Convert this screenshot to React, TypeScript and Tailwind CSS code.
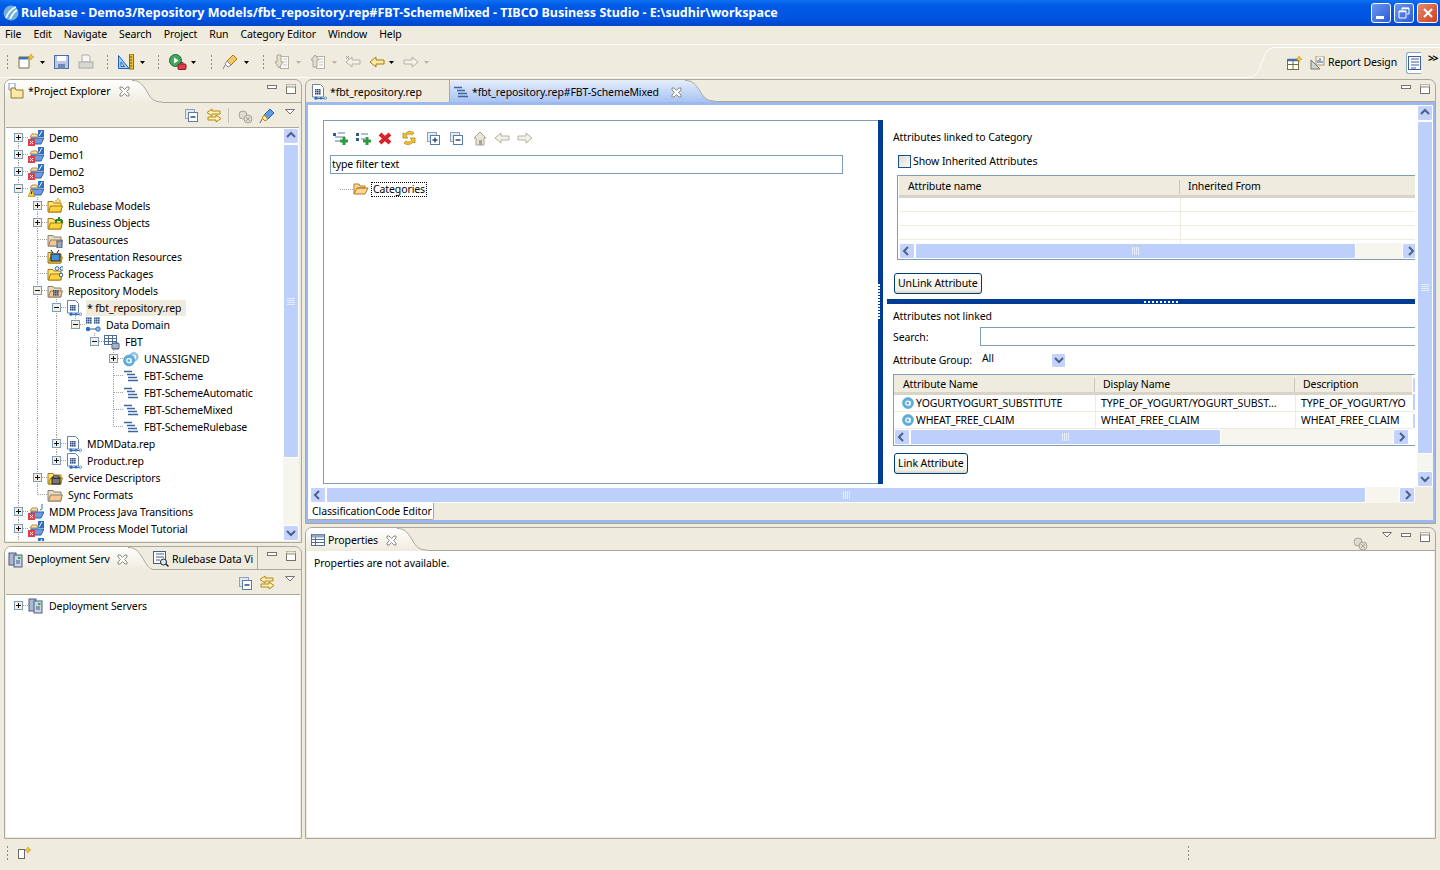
import type { ReactNode } from "react";

// --- little pixel icons, all on a 16 grid ---

function Svg({ s = 16, w, children, className = "" }: { s?: number; w?: number; children: ReactNode; className?: string }) {
  return (
    <svg width={w ?? s} height={s} viewBox={`0 0 ${w ?? s} ${s}`} className={`shrink-0 block ${className}`}>
      {children}
    </svg>
  );
}

const Logo = () => (
  <Svg>
    <circle cx="8" cy="8" r="7.5" fill="#6fb0dc" />
    <path d="M3 13C5 8 8 4 13 2M7 14c2-4 4-7 7-9" stroke="#fff" strokeWidth="1.6" fill="none" />
  </Svg>
);

const Folder = ({ dull }: { dull?: boolean }) => (
  <>
    <path d="M1 5V3.500h5L7 5h7v9H1z" fill={dull ? "#e8d9b8" : "#ffe27a"} stroke={dull ? "#8a8070" : "#a57a10"} />
    <path d="M1.500 14L3.500 8H15.500L13.500 14z" fill={dull ? "#f4c98e" : "#ffd23e"} stroke={dull ? "#8a8070" : "#a57a10"} />
  </>
);

const Grid = ({ x, y, c = "#2f4f86" }: { x: number; y: number; c?: string }) => (
  <g fill={c}>
    {[0, 2, 4].map((a) => [0, 2, 4].map((b) => <rect key={`${a}${b}`} x={x + a} y={y + b} width="1.6" height="1.6" />))}
  </g>
);

const ProjectIcon = ({ mark, pen = "wave" }: { mark: "err" | "warn"; pen?: "wave" | "j" }) => (
  <Svg>
    <rect x="10" y="0" width="6" height="7" fill={pen === "wave" ? "#2d6fc0" : "#fff"} />
    <path d={pen === "wave" ? "M11 6l3-5" : "M14 0v5l-2 1"} stroke={pen === "wave" ? "#fff" : "#2d6fc0"} fill="none" />
    <path d="M2 7l2-3h5l1 3z" fill="#f6e2b0" stroke="#b58a40" />
    <path d="M3 8h13l-3 6H3z" fill="#6f9be0" stroke="#2a5ca8" />
    {mark === "err" ? (
      <>
        <rect x="0" y="9" width="7" height="7" fill="#e0404c" />
        <path d="M2 11l3 3m0-3l-3 3" stroke="#fff" />
      </>
    ) : (
      <>
        <path d="M3.500 8L7 15.500H0z" fill="#ffc93a" stroke="#a57a10" strokeWidth=".6" />
        <path d="M3.500 10.500v2.500" stroke="#222" />
      </>
    )}
  </Svg>
);

const RepIcon = () => (
  <Svg>
    <path d="M1.500 .5h8l3 3V13h-11z" fill="#fff" stroke="#6f82a5" />
    <Grid x={4} y={5} />
    <path d="M4 14.500h11" stroke="#2a6fc4" strokeWidth="1.200" />
    <circle cx="5" cy="14.200" r="1.600" fill="#2a6fc4" />
    <circle cx="10" cy="14.200" r="1.200" fill="#2a6fc4" />
    <circle cx="14.500" cy="14.200" r="1.200" fill="#fff" stroke="#2a6fc4" strokeWidth=".7" />
  </Svg>
);

const DomainIcon = () => (
  <Svg>
    <Grid x={1} y={1} c="#345a90" />
    <Grid x={9} y={1} c="#345a90" />
    <path d="M1 0h6M9 0h6M2 12h12" stroke="#345a90" />
    <circle cx="3" cy="12" r="2.200" fill="#2a6fc4" />
    <circle cx="13" cy="12" r="2.200" fill="#8fb9ea" stroke="#2a6fc4" />
  </Svg>
);

const TableIcon = () => (
  <Svg>
    <rect x=".5" y="1.500" width="12" height="9" fill="#fff" stroke="#4f6d9c" />
    <path d="M.5 4.500h12M.5 7.500h12M4.500 1.500v9M8.500 1.500v9" stroke="#4f6d9c" />
    <rect x="8" y="9" width="7" height="6" rx="1" fill="#8fa0b8" stroke="#3c4d66" />
    <path d="M8 11h7M8 13h7" stroke="#dde" strokeWidth=".6" />
  </Svg>
);

const AttrCircle = ({ c = "#5fb0dc" }: { c?: string }) => (
  <>
    <circle cx="6" cy="6" r="5.500" fill={c} stroke="#3d8dbf" strokeWidth=".5" />
    <circle cx="5.800" cy="6.200" r="2" fill="none" stroke="#fff" strokeWidth="1.200" />
    <path d="M8 4v4.500" stroke="#fff" strokeWidth="1.100" />
  </>
);

const GroupIcon = () => (
  <Svg>
    <g transform="translate(6 1) scale(.8)">
      <AttrCircle c="#9cc8ea" />
    </g>
    <g transform="translate(0 3.500)">
      <AttrCircle />
    </g>
  </Svg>
);

const SchemeIcon = () => (
  <Svg>
    <path d="M1 3.500h8M4 6.500h8M5 9.500h9M5 12.500h10" stroke="#3d659f" strokeWidth="1.400" />
  </Svg>
);

const ServerIcon = () => (
  <Svg>
    <rect x="1" y="1" width="7" height="12" fill="#a9b9d4" stroke="#4a5d7c" />
    <rect x="6" y="3" width="8" height="12" fill="#c9d5e8" stroke="#4a5d7c" />
    <rect x="10" y="5" width="2.500" height="2" fill="#33b040" />
    <path d="M8 9h4M8 11h4" stroke="#4a5d7c" />
  </Svg>
);

const ExplorerIcon = () => (
  <Svg>
    <path d="M1 0h6v7H1z" fill="#fff" stroke="#7f93b5" />
    <path d="M3 7V5h4l1 2h7v8H3z" fill="#ffe9a6" stroke="#96752c" />
  </Svg>
);

const CloseX = () => (
  <Svg s={11}>
    <path d="M1 1h2l2.500 2.500L8 1h2v2L7.500 5.500 10 8v2H8L5.500 7.500 3 10H1V8l2.500-2.500L1 3z" fill="#fff" stroke="#8a8a80" />
  </Svg>
);

const PaneButtons = () => (
  <div className="flex items-start gap-[9px]">
    <Svg s={4} w={10} className="mt-[1px]">
      <rect x=".5" y=".5" width="9" height="3" fill="#fff" stroke="#77736a" />
    </Svg>
    <Svg s={11} w={10}>
      <rect x=".5" y=".5" width="9" height="9" fill="#fff" stroke="#77736a" />
      <rect x="0" y="0" width="10" height="3" fill="#efebde" stroke="#77736a" strokeWidth=".8" />
    </Svg>
  </div>
);

const ViewMenu = () => (
  <Svg s={6} w={10}>
    <path d="M.5.5h9L5 5z" fill="#fff" stroke="#77736a" />
  </Svg>
);

const DropArrow = ({ off }: { off?: boolean }) => (
  <Svg s={3} w={5}>
    <path d="M0 0h5L2.500 3z" fill={off ? "#b8b5a8" : "#000"} />
  </Svg>
);

const CollapseAll = () => (
  <Svg s={13} w={13}>
    <rect x=".5" y=".5" width="9" height="9" fill="#e4e8ef" stroke="#8ea2bf" />
    <rect x="3.500" y="3.500" width="9" height="9" fill="#fff" stroke="#5a7aa8" />
    <path d="M5.500 8h5" stroke="#254a80" strokeWidth="1.400" />
  </Svg>
);

const ExpandAll = () => (
  <Svg s={13} w={13}>
    <rect x=".5" y=".5" width="9" height="9" fill="#e4e8ef" stroke="#8ea2bf" />
    <rect x="3.500" y="3.500" width="9" height="9" fill="#fff" stroke="#5a7aa8" />
    <path d="M5.500 8h5M8 5.500v5" stroke="#254a80" strokeWidth="1.400" />
  </Svg>
);

const LinkArrows = () => (
  <Svg>
    <path d="M6 1L1 4.500 6 8V6h8V3H6zM10 7v2H2v3h8v2l5-3.500z" fill="#fff1b8" stroke="#b8860b" />
  </Svg>
);

const GearOff = () => (
  <Svg>
    <circle cx="6" cy="7" r="4" fill="#dedbd0" stroke="#a8a598" />
    <circle cx="11" cy="11" r="4" fill="#dedbd0" stroke="#a8a598" />
    <path d="M9 9l4 4m0-4l-4 4" stroke="#a8a598" />
  </Svg>
);

const PinBlue = () => (
  <Svg>
    <path d="M11 1l4 4-6 6-4-4z" fill="#5d9be8" stroke="#2c5fa8" />
    <path d="M5 7l4 4-3 2-3-3z" fill="#ffe9a6" stroke="#b8860b" />
    <path d="M3 11l-2 4" stroke="#666" />
  </Svg>
);

const PenYellow = () => (
  <Svg>
    <path d="M11 1l4 4-6 6-4-4z" fill="#f5c76a" stroke="#a57a10" />
    <path d="M5 7l4 4-3 2-3-3z" fill="#fff" stroke="#888" />
    <path d="M3 11l-2 4" stroke="#888" />
  </Svg>
);

const NewIcon = () => (
  <Svg>
    <path d="M1 3h10v11H1z" fill="#fff" stroke="#7a6a3a" />
    <path d="M1 3h9v2.500H1z" fill="#3f6fb5" />
    <path d="M13 0l1 2 2 1-2 1-1 2-1-2-2-1 2-1z" fill="#f5c52e" stroke="#b8860b" strokeWidth=".5" />
  </Svg>
);

const SaveIcon = () => (
  <Svg>
    <rect x=".5" y="1.500" width="14" height="13" fill="#b8c8e8" stroke="#4f6d9c" />
    <rect x="3" y="2" width="9" height="5" fill="#fff" />
    <rect x="4" y="10" width="7" height="4.500" fill="#6f8ab5" />
  </Svg>
);

const PrintIcon = () => (
  <Svg>
    <path d="M4 1h7l1 2v5H4z" fill="#f5f5f5" stroke="#b0b0a8" />
    <rect x="1" y="8" width="14" height="6" fill="#d8d8d0" stroke="#aaa" />
  </Svg>
);

const RulerIcon = () => (
  <Svg>
    <path d="M.5 1.500L11 14.500H.5z" fill="#a8d0f5" stroke="#1b5fc0" />
    <path d="M3 8l3.500 4.500H3z" fill="#fff" stroke="#1b5fc0" />
    <rect x="11.500" y="0" width="4" height="15" fill="#f0c030" stroke="#8a6a10" />
    <path d="M12 3h2M12 6h2M12 9h2M12 12h2" stroke="#553" />
  </Svg>
);

const RunIcon = () => (
  <Svg w={18}>
    <circle cx="6.500" cy="6.500" r="6" fill="#3fa85a" stroke="#1e6b35" />
    <path d="M5 3.500l4.500 3-4.500 3z" fill="#fff" />
    <rect x="9" y="10" width="8" height="5.500" rx="1" fill="#d8404c" stroke="#8a1c24" />
    <path d="M12 10V8.500h2V10" stroke="#8a1c24" fill="none" />
  </Svg>
);

const ImportOff = ({ up }: { up?: boolean }) => (
  <Svg>
    <rect x="6.500" y="2.500" width="8" height="12" fill="#fafafa" stroke="#b5b2a5" />
    <path d="M9 5h4M9 8h4M9 11h4" stroke="#c8c5b8" />
    <path d={up ? "M5 1L1 6h2v7h4V6h2z" : "M3 1h4v7h2l-4 6-4-6h2z"} fill="#e4e0d0" stroke="#a8a598" />
  </Svg>
);

const Arrow = ({ dir, on, star }: { dir: "l" | "r"; on?: boolean; star?: boolean }) => (
  <Svg s={14} w={16}>
    <path
      d={dir === "l" ? "M1 7l6-5v3h8v4H7v3z" : "M15 7L9 2v3H1v4h8v3z"}
      fill={on ? "#ffeeaa" : "#f3f1e8"}
      stroke={on ? "#a87a10" : "#b5b2a5"}
    />
    {star && <path d="M1 1l3 3m0-3L1 4" stroke="#a09d90" />}
  </Svg>
);

const Gripper = () => (
  <div className="w-[3px] h-[16px] bg-[radial-gradient(#8f8c80_1px,transparent_1px)] bg-[length:3px_4px] shrink-0" />
);

const Chev = ({ d }: { d: "u" | "d" | "l" | "r" }) => {
  const p = { u: "M3 8l4-4 4 4", d: "M3 5l4 4 4-4", l: "M8 3L4 7l4 4", r: "M6 3l4 4-4 4" }[d];
  return (
    <Svg s={14} w={14}>
      <path d={p} stroke="#4d6185" strokeWidth="2" fill="none" />
    </Svg>
  );
};

// --- scrollbars ---

function SBtn({ d, className = "" }: { d: "u" | "d" | "l" | "r"; className?: string }) {
  return (
    <div className={`w-[16px] h-[16px] shrink-0 flex items-center justify-center rounded-[2px] border border-white bg-[#c3d3fd] ${className}`}>
      <Chev d={d} />
    </div>
  );
}

function VBar({ thumb, className = "" }: { thumb: string; className?: string }) {
  return (
    <div className={`w-[16px] shrink-0 flex flex-col bg-[#f6f5ee] ${className}`}>
      <SBtn d="u" />
      <div className={`${thumb} flex items-center justify-center shrink-0 border border-white rounded-[2px] bg-[#bcd0fb]`}>
        <div className="w-[8px] h-[7px] bg-[repeating-linear-gradient(180deg,#e8eefc_0,#e8eefc_1px,transparent_1px,transparent_2px)]" />
      </div>
      <div className="flex-1" />
      <SBtn d="d" />
    </div>
  );
}

function HBar({ thumb, className = "" }: { thumb: string; className?: string }) {
  return (
    <div className={`h-[16px] shrink-0 flex bg-[#f6f5ee] ${className}`}>
      <SBtn d="l" />
      <div className={`${thumb} flex items-center justify-center shrink-0 border border-white rounded-[2px] bg-[#bcd0fb]`}>
        <div className="h-[8px] w-[7px] bg-[repeating-linear-gradient(90deg,#e8eefc_0,#e8eefc_1px,transparent_1px,transparent_2px)]" />
      </div>
      <div className="flex-1" />
      <SBtn d="r" />
    </div>
  );
}

// --- project tree ---

type Row = {
  g: string; // ancestor columns that carry a dotted line
  t?: "+" | "-";
  last?: boolean;
  first?: boolean;
  icon: ReactNode;
  label: string;
  sel?: boolean;
};

const fold = (extra?: ReactNode, dull?: boolean) => (
  <Svg>
    <Folder dull={dull} />
    {extra}
  </Svg>
);

const TREE: Row[] = [
  { g: "", t: "+", first: true, icon: <ProjectIcon mark="err" />, label: "Demo" },
  { g: "", t: "+", icon: <ProjectIcon mark="err" />, label: "Demo1" },
  { g: "", t: "+", icon: <ProjectIcon mark="err" />, label: "Demo2" },
  { g: "", t: "-", icon: <ProjectIcon mark="warn" />, label: "Demo3" },
  { g: "1", t: "+", icon: fold(<path d="M11 0l1 2 2 1-2 1-1 2-1-2-2-1 2-1z" fill="#ffe27a" stroke="#b8860b" strokeWidth=".5" />), label: "Rulebase Models" },
  { g: "1", t: "+", icon: fold(<path d="M9 5h6M12 2v3M9 5v3M15 5v3" stroke="#1c8a2c" strokeWidth="2" fill="none" />), label: "Business Objects" },
  { g: "1", icon: fold(<rect x="10" y="9" width="5" height="7" fill="#9aa8bc" stroke="#4a5d7c" />, true), label: "Datasources" },
  { g: "1", icon: fold(<><rect x="4" y="5" width="9" height="7" fill="#3f8fe0" stroke="#222" /><path d="M6 4L4 1m6 3l2-3" stroke="#222" /></>), label: "Presentation Resources" },
  { g: "1", icon: fold(<><circle cx="10" cy="2.500" r="1.800" fill="#fff" stroke="#1b5fc0" /><circle cx="15" cy="2.500" r="1.800" fill="#fff" stroke="#1b5fc0" /><circle cx="14" cy="9" r="1.800" fill="#fff" stroke="#1b5fc0" /></>), label: "Process Packages" },
  { g: "1", t: "-", icon: fold(<Grid x={6} y={7} />, true), label: "Repository Models" },
  { g: "11", t: "-", icon: <RepIcon />, label: "* fbt_repository.rep", sel: true },
  { g: "111", t: "-", last: true, icon: <DomainIcon />, label: "Data Domain" },
  { g: "1110", t: "-", last: true, icon: <TableIcon />, label: "FBT" },
  { g: "11100", t: "+", icon: <GroupIcon />, label: "UNASSIGNED" },
  { g: "11100", icon: <SchemeIcon />, label: "FBT-Scheme" },
  { g: "11100", icon: <SchemeIcon />, label: "FBT-SchemeAutomatic" },
  { g: "11100", icon: <SchemeIcon />, label: "FBT-SchemeMixed" },
  { g: "11100", last: true, icon: <SchemeIcon />, label: "FBT-SchemeRulebase" },
  { g: "11", t: "+", icon: <RepIcon />, label: "MDMData.rep" },
  { g: "11", t: "+", last: true, icon: <RepIcon />, label: "Product.rep" },
  { g: "1", t: "+", icon: fold(<><rect x="5" y="8" width="8" height="6" fill="#777" stroke="#222" /><path d="M6 6h6v2H6z" fill="#ccc" stroke="#222" /></>), label: "Service Descriptors" },
  { g: "1", last: true, icon: fold(undefined, true), label: "Sync Formats" },
  { g: "", t: "+", icon: <ProjectIcon mark="err" pen="j" />, label: "MDM Process Java Transitions" },
  { g: "", t: "+", icon: <ProjectIcon mark="err" />, label: "MDM Process Model Tutorial" },
  { g: "", t: "+", icon: <ProjectIcon mark="err" />, label: "" },
];

function Connector({ t, last, first }: { t?: "+" | "-"; last?: boolean; first?: boolean }) {
  return (
    <Svg s={17} w={19}>
      <path d={`M9.500 ${first ? 8 : 0}V${last ? 8.500 : 17}M10 8.500H19`} stroke="#a5a297" strokeDasharray="1 1" fill="none" />
      {t && (
        <>
          <rect x="5.500" y="4.500" width="8" height="8" fill="#f2f0e6" stroke="#7f9db9" />
          <path d={t === "+" ? "M7 8.500h5M9.500 6v5" : "M7 8.500h5"} stroke="#111" />
        </>
      )}
    </Svg>
  );
}

function TreeRow({ r }: { r: Row }) {
  return (
    <div className="flex h-[17px] items-center whitespace-nowrap">
      {r.g.split("").map((c, i) => (
        <div key={i} className="w-[19px] h-full shrink-0">
          {c === "1" && <div className="ml-[9px] h-full border-l border-dotted border-[#a5a297]" />}
        </div>
      ))}
      <Connector t={r.t} last={r.last} first={r.first} />
      <div className="w-[21px] shrink-0">{r.icon}</div>
      <span className={`-ml-[1px] pl-[1px] h-[16px] leading-[16px] ${r.sel ? "bg-[#efebde] pr-[5px]" : ""}`}>{r.label}</span>
    </div>
  );
}

// --- pane chrome ---

function ActiveTabCurve({ c1 = "#ffffff", c2 = "#efebde", w = 30, h = 23 }: { c1?: string; c2?: string; w?: number; h?: number }) {
  return (
    <svg width={w} height={h} viewBox={`0 0 ${w} ${h}`} className="shrink-0 block">
      <defs>
        <linearGradient id={`g${c1.slice(1)}`} x1="0" y1="0" x2="0" y2="1">
          <stop offset="0" stopColor={c1} />
          <stop offset="1" stopColor={c2} />
        </linearGradient>
      </defs>
      <path d={`M0 0C8 0 10 4 15 ${h / 2}C19 ${h - 4} 22 ${h - 1} ${w} ${h - 1}V${h}H0z`} fill={`url(#g${c1.slice(1)})`} />
      <path d={`M0 .5C8 .5 10 4 15 ${h / 2}C19 ${h - 4} 22 ${h - 1} ${w} ${h - 1}`} fill="none" stroke="#aca899" />
    </svg>
  );
}

function SmallButton({ children }: { children: ReactNode }) {
  return (
    <div className="h-[21px] px-[3px] flex items-center rounded-[3px] border border-[#003c74] bg-[linear-gradient(180deg,#ffffff,#f0efe6_85%,#d8d4c4)] leading-none">
      {children}
    </div>
  );
}

function TableHead({ cols, h = "h-[22px]" }: { cols: [string, string][]; h?: string }) {
  return (
    <div className={`flex ${h} pt-[2px] bg-[#efebde] border-b-[3px] border-[#d8d4c8] shrink-0`}>
      {cols.map(([label, w], i) => (
        <div key={label} className={`${w} shrink-0 flex items-center ${i ? "pl-[8px]" : "pl-[9px]"}`}>
          {i > 0 && <div className="-ml-[8px] mr-[8px] w-[1px] h-[14px] bg-[#cbc7b8]" />}
          {label}
        </div>
      ))}
    </div>
  );
}

export default function App() {
  return (
    <div className="w-[1440px] h-[870px] overflow-hidden flex flex-col bg-[#efebde] text-[10.5px] tracking-[-0.1px] text-black font-['Noto_Sans',sans-serif] leading-none">
      {/* title bar */}
      <div className="h-[26px] shrink-0 flex items-center pl-[3px] pr-[2px] bg-[linear-gradient(180deg,#0f72f2_0%,#005ae6_20%,#0054e0_70%,#0046c8_100%)]">
        <Logo />
        <span className="ml-[2px] mt-[1px] text-white text-[12.5px] tracking-normal font-bold whitespace-nowrap">
          Rulebase - Demo3/Repository Models/fbt_repository.rep#FBT-SchemeMixed - TIBCO Business Studio - E:\sudhir\workspace
        </span>
        <div className="ml-auto flex gap-[3px]">
          <div className="w-[20px] h-[20px] rounded-[3px] border border-white bg-[linear-gradient(135deg,#6d96ec,#2b5cd8)] flex items-end pl-[4px] pb-[3px]">
            <div className="w-[8px] h-[3px] bg-white" />
          </div>
          <div className="w-[20px] h-[20px] rounded-[3px] border border-white bg-[linear-gradient(135deg,#6d96ec,#2b5cd8)] flex items-center justify-center">
            <Svg s={12} w={12}>
              <path d="M4 3V1h7v6H9M1 4h7v7H1z" fill="none" stroke="#fff" />
              <path d="M1 4.500h7M4 1.500h7" stroke="#fff" strokeWidth="1.400" />
            </Svg>
          </div>
          <div className="w-[21px] h-[20px] rounded-[3px] border border-white bg-[linear-gradient(135deg,#e88a6c,#cf3e1c)] flex items-center justify-center">
            <Svg s={12} w={12}>
              <path d="M2 2l8 8m0-8l-8 8" stroke="#fff" strokeWidth="2" />
            </Svg>
          </div>
        </div>
      </div>

      {/* menu */}
      <div className="h-[19px] shrink-0 flex items-center gap-[12px] pl-[5px] pb-[1px] border-b border-white">
        {["File", "Edit", "Navigate", "Search", "Project", "Run", "Category Editor", "Window", "Help"].map((m) => (
          <span key={m}>{m}</span>
        ))}
      </div>

      {/* toolbar */}
      <div className="h-[33px] shrink-0 flex">
        <div className="flex-1 flex items-center pl-[6px] pt-[2px] border-b border-white">
          <Gripper />
          <div className="ml-[9px]"><NewIcon /></div>
          <div className="ml-[6px]"><DropArrow /></div>
          <div className="ml-[9px]"><SaveIcon /></div>
          <div className="ml-[8px]"><PrintIcon /></div>
          <div className="ml-[12px]"><Gripper /></div>
          <div className="ml-[9px]"><RulerIcon /></div>
          <div className="ml-[6px]"><DropArrow /></div>
          <div className="ml-[12px]"><Gripper /></div>
          <div className="ml-[9px]"><RunIcon /></div>
          <div className="ml-[4px]"><DropArrow /></div>
          <div className="ml-[14px]"><Gripper /></div>
          <div className="ml-[9px]"><PenYellow /></div>
          <div className="ml-[6px]"><DropArrow /></div>
          <div className="ml-[13px]"><Gripper /></div>
          <div className="ml-[9px]"><ImportOff /></div>
          <div className="ml-[6px]"><DropArrow off /></div>
          <div className="ml-[9px]"><ImportOff up /></div>
          <div className="ml-[6px]"><DropArrow off /></div>
          <div className="ml-[8px]"><Arrow dir="l" star /></div>
          <div className="ml-[8px]"><Arrow dir="l" on /></div>
          <div className="ml-[4px]"><DropArrow /></div>
          <div className="ml-[9px]"><Arrow dir="r" /></div>
          <div className="ml-[5px]"><DropArrow off /></div>
        </div>
        <svg width="30" height="33" viewBox="0 0 30 33" className="shrink-0 block">
          <path d="M0 32.500C10 32.500 12 30 16 20C20 9 22 2.500 30 2.500" fill="none" stroke="#fff" />
        </svg>
        <div className="w-[165px] shrink-0">
          <div className="mt-[2px] border-t border-white" />
          <div className="flex items-center h-[29px] pl-[12px]">
            <Svg s={14} w={15}>
              <rect x=".5" y="3.500" width="11" height="10" fill="#fff" stroke="#7a6a3a" />
              <path d="M.5 4h11" stroke="#3f6fb5" strokeWidth="2.500" />
              <path d="M6 3.500v10M.5 8.500h11" stroke="#7a6a3a" />
              <path d="M12 0l1 2 2 1-2 1-1 2-1-2-2-1 2-1z" fill="#f5c52e" stroke="#b8860b" strokeWidth=".5" />
            </Svg>
            <div className="ml-[8px]">
              <Svg s={14} w={15}>
                <path d="M1 13V4l9 9z" fill="#cfd6cf" stroke="#777" />
                <rect x="6" y="0" width="8" height="9" fill="#f8f4e8" stroke="#a89870" />
                <path d="M8 7V4M10 7V2M12 7V5" stroke="#2c5fa8" />
              </Svg>
            </div>
            <span className="ml-[3px] w-[69px] shrink-0 whitespace-nowrap">Report Design</span>
            <div className="ml-[9px] w-[15px] h-[22px] flex items-center border border-r-0 border-[#8ea7cf] rounded-l-[3px] bg-white pl-[1px]">
              <Svg s={14} w={13}>
                <rect x=".5" y=".5" width="12" height="13" fill="#fff" stroke="#3c5f96" />
                <path d="M3 3h8M3 6h8M3 9h8M3 12h5" stroke="#3c5f96" />
              </Svg>
            </div>
            <span className="ml-[7px] -mt-[8px] font-bold tracking-[-1.500px]">&gt;&gt;</span>
          </div>
        </div>
      </div>

      {/* workbench */}
      <div className="h-[761px] shrink-0 flex pl-[4px] pr-[4px] pt-[1px] gap-[3px]">
        {/* left column */}
        <div className="w-[298px] shrink-0 flex flex-col gap-[3px]">
          <div className="h-[464px] flex flex-col rounded-t-[7px] border border-[#aca899] overflow-hidden">
            <div className="h-[23px] flex shrink-0">
              <div className="h-[23px] pl-[3px] pb-[1px] flex items-center bg-[linear-gradient(180deg,#ffffff,#efebde)]">
                <ExplorerIcon />
                <span className="ml-[4px] w-[82px] whitespace-nowrap">*Project Explorer</span>
                <div className="ml-[9px] mr-[2px]"><CloseX /></div>
              </div>
              <ActiveTabCurve />
              <div className="flex-1 border-b border-[#aca899] flex justify-end pt-[4px] pr-[5px]">
                <PaneButtons />
              </div>
            </div>
            <div className="h-[24px] pt-[1px] flex items-center shrink-0 pl-[180px]">
              <CollapseAll />
              <div className="ml-[8px]"><LinkArrows /></div>
              <div className="ml-[6px] w-[1px] h-[15px] bg-[#c9c5b6]" />
              <div className="ml-[8px]"><GearOff /></div>
              <div className="ml-[6px]"><PinBlue /></div>
              <div className="ml-[10px] -mt-[8px]"><ViewMenu /></div>
            </div>
            <div className="flex-1 min-h-0 ml-[1px] mr-[2px] mb-[1px] flex bg-white border-t border-[#aca899] overflow-hidden">
              <div className="flex-1 min-w-0 pl-[3px] pt-[1px] overflow-hidden">
                {TREE.map((r, i) => (
                  <TreeRow key={i} r={r} />
                ))}
              </div>
              <VBar thumb="h-[314px]" />
            </div>
          </div>

          <div className="flex-1 min-h-0 flex flex-col rounded-t-[7px] border border-[#aca899] overflow-hidden">
            <div className="h-[23px] flex shrink-0">
              <div className="h-[23px] pl-[3px] pt-[2px] flex items-center bg-[linear-gradient(180deg,#ffffff,#efebde)]">
                <ServerIcon />
                <span className="ml-[3px] w-[82px] whitespace-nowrap">Deployment Serv</span>
                <div className="ml-[8px]"><CloseX /></div>
              </div>
              <ActiveTabCurve w={24} />
              <div className="flex items-center pl-[1px] pr-[3px] pt-[2px] border-b border-r border-[#aca899]">
                <Svg>
                  <rect x=".5" y=".5" width="12" height="12" fill="#fff" stroke="#3c5f96" />
                  <path d="M3 3h8M3 6h8M3 9h4" stroke="#3c5f96" />
                  <circle cx="10.500" cy="11" r="3" fill="#dfe8f5" stroke="#222" />
                  <path d="M13 13l2.500 2.500" stroke="#222" strokeWidth="1.500" />
                </Svg>
                <span className="ml-[3px] w-[82px] whitespace-nowrap">Rulebase Data Vi</span>
              </div>
              <div className="flex-1 border-b border-[#aca899] flex justify-end pt-[4px] pr-[5px]">
                <PaneButtons />
              </div>
            </div>
            <div className="h-[24px] pt-[2px] flex items-center shrink-0 pl-[234px]">
              <CollapseAll />
              <div className="ml-[7px]"><LinkArrows /></div>
              <div className="ml-[10px] -mt-[8px]"><ViewMenu /></div>
            </div>
            <div className="flex-1 min-h-0 mx-[1px] mb-[1px] pl-[3px] pt-[2px] bg-white border-t border-[#aca899]">
              <TreeRow r={{ g: "", t: "+", first: true, last: true, icon: <ServerIcon />, label: "Deployment Servers" }} />
            </div>
          </div>
        </div>

        {/* right column */}
        <div className="flex-1 min-w-0 flex flex-col gap-[3px]">
          {/* editor */}
          <div className="h-[445px] flex flex-col rounded-t-[7px] border border-[#aca899] overflow-hidden">
            <div className="h-[22px] flex shrink-0">
              <div className="w-[144px] shrink-0 pl-[5px] pt-[2px] flex items-center border-r border-[#aca899]">
                <RepIcon />
                <span className="ml-[3px] whitespace-nowrap">*fbt_repository.rep</span>
              </div>
              <div className="pl-[3px] pt-[2px] flex items-center rounded-tl-[6px] bg-[linear-gradient(180deg,#e6eefb,#a8c2f2)]">
                <SchemeIcon />
                <span className="ml-[3px] w-[191px] whitespace-nowrap">*fbt_repository.rep#FBT-SchemeMixed</span>
                <div className="ml-[8px] mr-[3px]"><CloseX /></div>
              </div>
              <ActiveTabCurve c1="#e6eefb" c2="#a8c2f2" h={22} />
              <div className="flex-1 flex justify-end pt-[4px] pr-[5px] border-b border-[#aca899]">
                <PaneButtons />
              </div>
            </div>
            <div className="flex-1 min-h-0 flex flex-col border-x-[2px] border-t-[3px] border-b-[3px] border-[#9db8ee]">
              <div className="flex-1 min-h-0 flex flex-col bg-white">
                <div className="flex-1 min-h-0 flex">
                  <div className="flex-1 min-w-0 flex overflow-hidden">
                    {/* category tree */}
                    <div className="w-[570px] shrink-0 pl-[15px] pt-[15px]">
                      <div className="h-[364px] border border-r-0 border-[#7f9db9] flex flex-col">
                        <div className="h-[34px] pl-[8px] flex items-center gap-[7px] shrink-0">
                          <Svg>
                            <path d="M1 3h3v3H1z" fill="#345a90" />
                            <path d="M6 3h7M3 7h10M3 11h5" stroke="#5f7a9f" />
                            <path d="M12 7v8M8 11h8" stroke="#2f9a3f" strokeWidth="3" />
                          </Svg>
                          <Svg>
                            <path d="M1 3h3v3H1zM1 8h3v3H1z" fill="#345a90" />
                            <path d="M6 4h7M6 9h4" stroke="#5f7a9f" />
                            <path d="M12 7v8M8 11h8" stroke="#2f9a3f" strokeWidth="3" />
                          </Svg>
                          <Svg s={14}>
                            <path d="M2 3l10 9m0-9L2 12" stroke="#d8222c" strokeWidth="4" />
                          </Svg>
                          <div className="ml-[2px]">
                            <Svg>
                              <path d="M13 3a6 6 0 0 0-9 1l-2-1v5h5L5 6a4 4 0 0 1 6-1zM3 13a6 6 0 0 0 9-1l2 1V8H9l2 2a4 4 0 0 1-6 1z" fill="#f5c52e" stroke="#a87a10" strokeWidth=".7" />
                            </Svg>
                          </div>
                          <div className="ml-[3px]"><ExpandAll /></div>
                          <div className="ml-[3px]"><CollapseAll /></div>
                          <div className="ml-[3px]">
                            <Svg s={15} w={14}>
                              <path d="M7 1L1 7h2v7h8V7h2z" fill="#e8e4d6" stroke="#a8a598" />
                              <rect x="6" y="9" width="3" height="5" fill="#a8a598" />
                            </Svg>
                          </div>
                          <Arrow dir="l" />
                          <Arrow dir="r" />
                        </div>
                        <div className="ml-[6px] w-[513px] h-[19px] px-[1px] flex items-center border border-[#7f9db9] shrink-0">
                          type filter text
                        </div>
                        <div className="ml-[16px] mt-[7px] flex items-center">
                          <div className="w-[13px] border-t border-dotted border-[#a5a297]" />
                          <Svg>
                            <path d="M1 13V3h5l1 2h5v2H4L1 13h11l3-6H4" fill="#ffd79a" stroke="#b57a20" />
                          </Svg>
                          <span className="ml-[2px] h-[15px] flex items-center px-[1px] border border-dotted border-black">Categories</span>
                        </div>
                      </div>
                    </div>
                    {/* vertical sash */}
                    <div className="w-[5px] shrink-0 mt-[15px] h-[364px] bg-[#003c96] flex items-center">
                      <div className="h-[36px] w-[2px] bg-[repeating-linear-gradient(180deg,#fff_0,#fff_2px,transparent_2px,transparent_3px)]" />
                    </div>
                    {/* attribute side */}
                    <div className="w-[533px] shrink-0 pl-[4px]">
                      <div className="pl-[6px] mt-[26px] h-[13px] flex items-center">Attributes linked to Category</div>
                      <div className="pl-[11px] mt-[10px] flex items-center h-[14px]">
                        <div className="w-[13px] h-[13px] border border-[#1c5180] bg-[linear-gradient(135deg,#dcdcd6,#fafaf8)]" />
                        <span className="ml-[2px]">Show Inherited Attributes</span>
                      </div>
                      <div className="ml-[10px] mt-[7px] h-[85px] w-[530px] border border-[#7f9db9] pl-[1px] flex flex-col overflow-hidden">
                        <TableHead cols={[["Attribute name", "w-[280px]"], ["Inherited From", "w-[240px]"]]} />
                        <div className="h-[45px] overflow-hidden">
                          {[0, 1, 2, 3].map((i) => (
                            <div key={i} className="flex h-[14px] border-b border-[#efebde]">
                              <div className="w-[282px] border-r border-[#efebde]" />
                            </div>
                          ))}
                        </div>
                        <div className="w-[519px] shrink-0">
                          <HBar thumb="w-[441px]" />
                        </div>
                      </div>
                      <div className="ml-[7px] mt-[13px] w-fit"><SmallButton>UnLink Attribute</SmallButton></div>
                      <div className="mt-[5px] h-[5px] bg-[#003c96] flex items-center">
                        <div className="ml-[257px] w-[34px] h-[2px] bg-[repeating-linear-gradient(90deg,#fff_0,#fff_2px,transparent_2px,transparent_4px)]" />
                      </div>
                      <div className="pl-[6px] mt-[6px] h-[13px] flex items-center">Attributes not linked</div>
                      <div className="pl-[6px] mt-[4px] flex items-center h-[19px]">
                        <span className="w-[87px] shrink-0 pt-[1px]">Search:</span>
                        <div className="flex-1 h-[19px] border border-[#7f9db9]" />
                      </div>
                      <div className="pl-[6px] mt-[6px] flex items-center h-[16px]">
                        <span className="w-[89px] shrink-0">Attribute Group:</span>
                        <span className="w-[69px] shrink-0 -mt-[4px]">All</span>
                        <div className="w-[15px] h-[15px] rounded-[2px] border border-white bg-[#c3d3fd] flex items-center justify-center">
                          <Chev d="d" />
                        </div>
                      </div>
                      <div className="ml-[6px] mt-[6px] h-[72px] w-[530px] border border-[#7f9db9] flex overflow-hidden">
                        <div className="flex flex-col w-[518px] shrink-0">
                          <TableHead h="h-[20px]" cols={[["Attribute Name", "w-[200px]"], ["Display Name", "w-[200px]"], ["Description", "w-[118px]"]]} />
                          {[
                            ["YOGURTYOGURT_SUBSTITUTE", "TYPE_OF_YOGURT/YOGURT_SUBST...", "TYPE_OF_YOGURT/YO"],
                            ["WHEAT_FREE_CLAIM", "WHEAT_FREE_CLAIM", "WHEAT_FREE_CLAIM"],
                          ].map(([a, b, c]) => (
                            <div key={a} className="h-[17px] shrink-0 flex items-center border-b border-[#efebde] whitespace-nowrap">
                              <div className="w-[202px] shrink-0 flex items-center pl-[8px] border-r border-[#efebde] h-full">
                                <Svg s={12} w={12}><AttrCircle /></Svg>
                                <span className="ml-[2px]">{a}</span>
                              </div>
                              <div className="w-[200px] shrink-0 pl-[5px] border-r border-[#efebde] h-full flex items-center">{b}</div>
                              <div className="w-[110px] shrink-0 pl-[5px] h-full flex items-center">{c}</div>
                            </div>
                          ))}
                          <HBar thumb="w-[311px]" className="w-[515px]" />
                        </div>
                        <VBar thumb="h-[18px]" className="h-[52px] mt-[2px]" />
                      </div>
                      <div className="ml-[7px] mt-[7px] w-fit"><SmallButton>Link Attribute</SmallButton></div>
                    </div>
                  </div>
                  <VBar thumb="h-[333px]" className="ml-[2px]" />
                </div>
                <div className="flex shrink-0">
                  <div className="w-[2px] shrink-0" />
                  <HBar thumb="w-[1040px]" className="flex-1" />
                  <div className="w-[18px] shrink-0 bg-[#efebde]" />
                </div>
              </div>
              <div className="h-[17px] shrink-0 bg-[#efebde] flex">
                <div className="w-[126px] h-[17px] pt-[1px] flex items-center pl-[4px] bg-white border-r border-b border-[#aca899] rounded-br-[2px] whitespace-nowrap">
                  ClassificationCode Editor
                </div>
              </div>
            </div>
          </div>

          {/* properties */}
          <div className="flex-1 min-h-0 flex flex-col rounded-t-[7px] border border-[#aca899] overflow-hidden">
            <div className="h-[23px] flex shrink-0">
              <div className="pl-[5px] pt-[1px] flex items-center bg-[linear-gradient(180deg,#ffffff,#efebde)]">
                <Svg s={14}>
                  <rect x=".5" y="1.500" width="13" height="11" fill="#fff" stroke="#4f6d9c" />
                  <path d="M1 3h12" stroke="#8fa6c8" strokeWidth="3" />
                  <path d="M1 6.500h12M1 9.500h12M4.500 4v8" stroke="#4f6d9c" />
                </Svg>
                <span className="ml-[3px] w-[50px] whitespace-nowrap">Properties</span>
                <div className="ml-[8px]"><CloseX /></div>
              </div>
              <ActiveTabCurve />
              <div className="flex-1 border-b border-[#aca899] flex justify-end items-start pt-[4px] pr-[5px] gap-[9px]">
                <div className="-mt-[1px] mr-[5px] pt-[4px]"><GearOff /></div>
                <ViewMenu />
                <PaneButtons />
              </div>
            </div>
            <div className="flex-1 min-h-0 mx-[1px] mb-[1px] pl-[7px] pt-[7px] bg-white">Properties are not available.</div>
          </div>
        </div>
      </div>

      {/* status bar */}
      <div className="flex-1 flex items-center pl-[6px] pb-[4px]">
        <Gripper />
        <div className="ml-[9px]">
          <Svg s={14}>
            <rect x=".5" y="3.500" width="6" height="9" fill="#fff" stroke="#6a6a60" />
            <path d="M10 1l1 2 2 1-2 1-1 2-1-2-2-1 2-1z" fill="#f5c52e" stroke="#b8860b" strokeWidth=".5" />
          </Svg>
        </div>
        <div className="ml-[1155px]"><Gripper /></div>
      </div>
    </div>
  );
}
